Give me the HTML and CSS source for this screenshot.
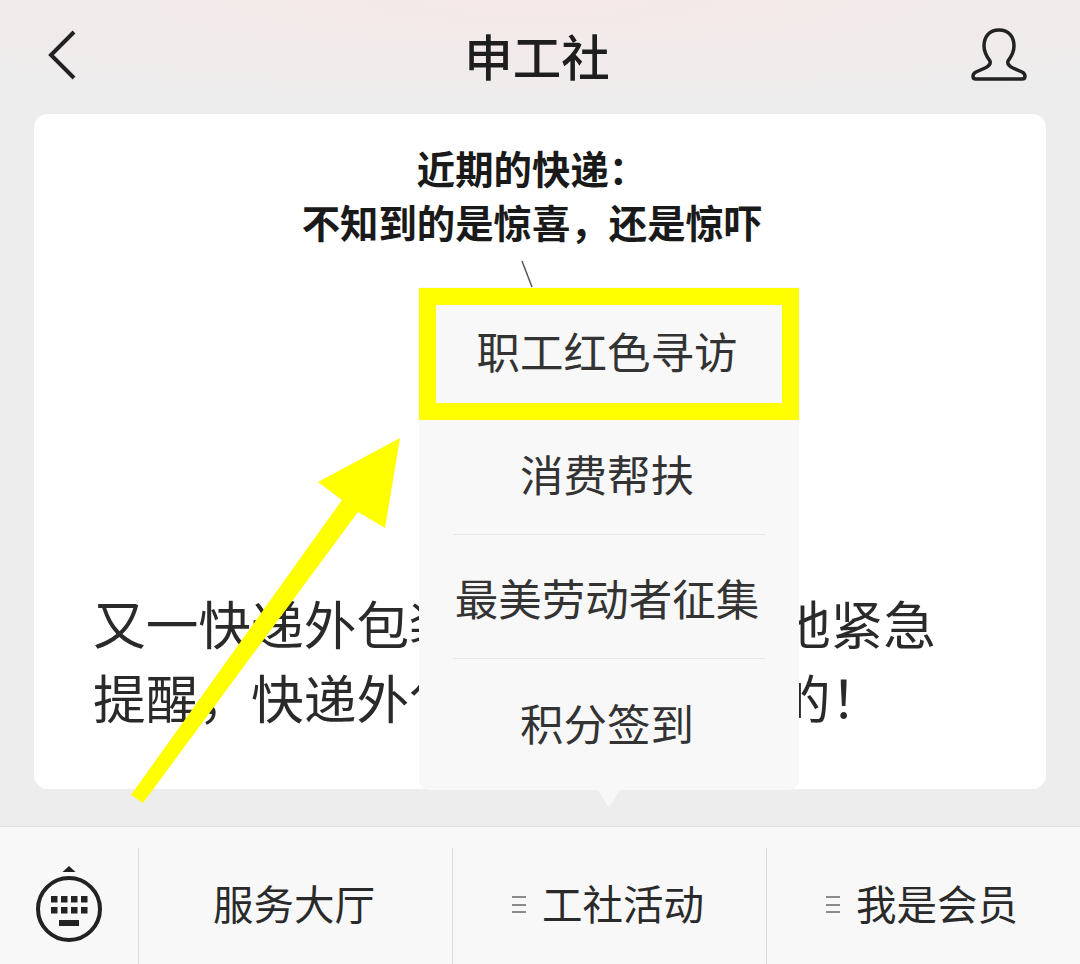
FILE: index.html
```html
<!DOCTYPE html>
<html lang="zh-CN">
<head>
<meta charset="utf-8">
<title>申工社</title>
<link rel="stylesheet" href="styles.css">
</head>
<body>
<div class="page">
  <header class="topbar">
    <svg class="back" width="30" height="50" viewBox="0 0 30 50"><path d="M27 2 L4 25 L27 48" fill="none" stroke="#222" stroke-width="4"/></svg>
    <h1 class="title">申工社</h1>
    <svg class="person" width="56" height="54" viewBox="0 0 56 54"><path d="M28 2C18 2 13 9 13 18C13 25 16 29 19 33C20 36 18 38 14 40L5 44C1 46 1 51 5 51H51C55 51 55 46 51 44L42 40C38 38 36 36 37 33C40 29 43 25 43 18C43 9 38 2 28 2Z" fill="none" stroke="#222" stroke-width="3.5"/></svg>
  </header>

  <main class="card">
    <p class="caption">近期的快递：<br>不知到的是惊喜，还是惊吓</p>
    <p class="headline">又一快递外包装检出阳性！多地紧急<br>提醒，快递外包装是这样消毒的！</p>
  </main>

  <nav class="tabbar">
    <div class="kbd-cell">
      <svg width="72" height="80" viewBox="0 0 72 80">
        <path d="M29.5 7 L36 1 L42.500 7Z" fill="#222"/>
        <circle cx="36" cy="44" r="31" fill="none" stroke="#222" stroke-width="4"/>
        <g fill="#222">
          <rect x="18" y="31" width="6.500" height="6.500"/><rect x="28" y="31" width="6.500" height="6.500"/><rect x="38" y="31" width="6.500" height="6.500"/><rect x="48" y="31" width="6.500" height="6.500"/>
          <rect x="18" y="42" width="6.500" height="6.500"/><rect x="28" y="42" width="6.500" height="6.500"/><rect x="38" y="42" width="6.500" height="6.500"/><rect x="48" y="42" width="6.500" height="6.500"/>
          <rect x="26" y="55" width="20" height="6"/>
        </g>
      </svg>
    </div>
    <div class="tab">服务大厅</div>
    <div class="tab"><span class="lines"><i></i><i></i><i></i></span>工社活动</div>
    <div class="tab"><span class="lines"><i></i><i></i><i></i></span>我是会员</div>
  </nav>

  <div class="menu">
    <div class="menu-item">职工红色寻访</div>
    <div class="menu-item">消费帮扶</div>
    <div class="menu-item">最美劳动者征集</div>
    <div class="menu-item">积分签到</div>
    <div class="frame"></div>
  </div>

  <svg class="marks" width="1080" height="964" viewBox="0 0 1080 964">
    <path d="M522 261 L532 287" stroke="#555" stroke-width="1.500" fill="none"/>
    <polygon points="400,438 385,528 358,512 143,803 131,795 342,500 318,482" fill="#ffff00"/>
  </svg>
</div>
</body>
</html>
```

FILE: styles.css
```css
* { box-sizing: border-box; }

html, body {
  margin: 0;
  padding: 0;
}

body {
  font-family: "Noto Sans CJK SC", "Noto Sans", sans-serif;
  color: #222;
}

.page {
  position: relative;
  width: 1080px;
  height: 964px;
  overflow: hidden;
  display: flex;
  flex-direction: column;
  background: #ededed;
}

.topbar {
  height: 114px;
  flex: none;
  display: grid;
  grid-template-columns: 1fr auto 1fr;
  align-items: center;
  padding: 0 53px 4px 47px;
  background: radial-gradient(ellipse 820px 110px at 50% 0, #f5e8e8 0%, #f1ebeb 60%, #ededed 100%);
}

.back { justify-self: start; }
.person { justify-self: end; }

.title {
  margin: 0;
  font-size: 48.500px;
  line-height: 56px;
  font-weight: 500;
  color: #1e1e1e;
}

.card {
  flex: none;
  height: 675px;
  margin: 0 34px;
  background: #fff;
  border-radius: 14px;
  display: flex;
  flex-direction: column;
  justify-content: space-between;
  padding: 26px 0 56px;
}

.caption {
  margin: 0;
  padding-right: 16px;
  text-align: center;
  font-size: 38.400px;
  line-height: 54px;
  font-weight: 700;
  color: #1a1a1a;
}

.headline {
  margin: 0;
  padding-left: 59px;
  font-size: 52.700px;
  line-height: 74px;
  color: #2a2a2a;
  white-space: nowrap;
}

.tabbar {
  margin-top: auto;
  height: 138px;
  flex: none;
  display: grid;
  grid-template-columns: 138px 314px 314px 314px;
  background: #f8f8f8;
  border-top: 1px solid #dfdfdf;
}

.kbd-cell {
  display: flex;
  justify-content: center;
  padding-top: 38px;
}

.tab {
  position: relative;
  display: flex;
  align-items: center;
  justify-content: center;
  gap: 16px;
  padding: 21px 2px 7px 0;
  font-size: 40.500px;
  color: #2a2a2a;
}

.tab::before {
  content: "";
  position: absolute;
  left: 0;
  top: 21px;
  bottom: 0;
  width: 1px;
  background: #dcdcdc;
}

.lines {
  display: flex;
  flex-direction: column;
  gap: 5.500px;
  width: 14px;
  margin-top: 4px;
}

.lines i {
  display: block;
  height: 2px;
  background: #8a8a8a;
}

.menu {
  position: absolute;
  left: 419px;
  top: 287px;
  width: 380px;
  height: 503px;
  background: #f8f8f8;
  border-radius: 0 0 10px 10px;
}

.menu::after {
  content: "";
  position: absolute;
  left: 179px;
  bottom: -18px;
  border-left: 11px solid transparent;
  border-right: 11px solid transparent;
  border-top: 18px solid #f7f7f7;
}

.menu-item {
  height: 124px;
  margin: 0 34px;
  padding: 2px 4px 0 0;
  display: flex;
  align-items: center;
  justify-content: center;
  font-size: 43.500px;
  color: #333;
  white-space: nowrap;
}

.menu-item:nth-child(2),
.menu-item:nth-child(3) {
  border-bottom: 1px solid #e8e8e8;
}

.frame {
  position: absolute;
  left: 0;
  top: 1px;
  width: 380px;
  height: 132px;
  border: 17px solid #ffff00;
}

.marks {
  position: absolute;
  left: 0;
  top: 0;
  pointer-events: none;
}
```
